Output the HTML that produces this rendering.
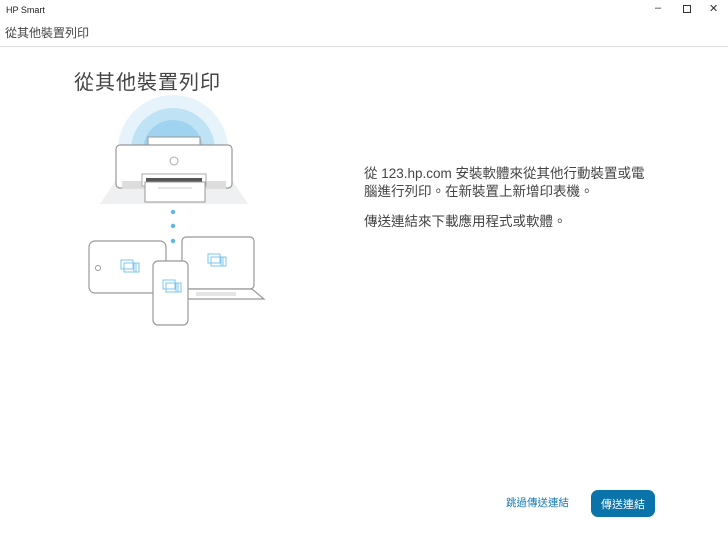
<!DOCTYPE html>
<html><head><meta charset="utf-8"><style>
body{margin:0;width:728px;height:538px;background:#fff;font-family:"Liberation Sans","Noto Sans CJK TC",sans-serif;position:relative;overflow:hidden}
.a{position:absolute;white-space:nowrap}
</style></head><body>
<div class="a" style="left:6px;top:5px;font-size:9px;color:#222">HP Smart</div>
<div class="a" style="left:655px;top:2px;font-size:11px;color:#333">–</div>
<div class="a" style="left:683px;top:5px;width:6px;height:6px;border:1px solid #333"></div>
<div class="a" style="left:709px;top:2px;font-size:11px;color:#333">✕</div>
<div class="a" style="left:5px;top:24px;font-size:12px;color:#444">從其他裝置列印</div>
<div class="a" style="left:0;top:46px;width:728px;height:1px;background:#e2e2e2"></div>
<div class="a" style="left:74px;top:66px;font-size:20px;color:#444;letter-spacing:1px">從其他裝置列印</div>
<svg class="a" style="left:0;top:0" width="728" height="538">
<polygon points="100,204 248,204 232,180 116,180" fill="#eef0f2"/>
<path d="M118,150 A55,55 0 0 1 228,150 Z" fill="#e6f3fb"/>
<path d="M131,150 A42,42 0 0 1 215,150 Z" fill="#bfe2f5"/>
<path d="M143,150 A30,30 0 0 1 203,150 Z" fill="#9fd3f0"/>
<rect x="148" y="137" width="52" height="12" fill="#fff" stroke="#999" stroke-width="1"/>
<rect x="116" y="145" width="116" height="43" rx="4" fill="#fff" stroke="#999" stroke-width="1.2"/>
<rect x="122" y="181" width="104" height="8" fill="#ddd"/>
<circle cx="174" cy="161" r="4" fill="none" stroke="#aaa"/>
<rect x="142" y="174" width="64" height="12" fill="#fff" stroke="#aaa"/>
<rect x="146" y="178" width="56" height="5" fill="#555"/>
<rect x="145" y="182" width="60" height="20" fill="#fff" stroke="#999"/>
<line x1="158" y1="188" x2="192" y2="188" stroke="#ccc"/>
<circle cx="173" cy="212" r="2.2" fill="#5bb7ea"/>
<circle cx="173" cy="226" r="2.2" fill="#5bb7ea"/>
<circle cx="173" cy="241" r="2.2" fill="#5bb7ea"/>
<rect x="89" y="241" width="77" height="52" rx="6" fill="#fff" stroke="#999" stroke-width="1.2"/>
<circle cx="98" cy="268" r="2.5" fill="none" stroke="#999"/>
<rect x="182" y="237" width="72" height="52" rx="4" fill="#fff" stroke="#999" stroke-width="1.2"/>
<polygon points="186,289 252,289 264,299 186,299" fill="#fff" stroke="#999" stroke-width="1.2"/>
<rect x="196" y="292" width="40" height="4" fill="#e5e5e5"/>
<rect x="153" y="261" width="35" height="64" rx="5" fill="#fff" stroke="#999" stroke-width="1.2"/>
<g fill="none" stroke="#7cc4ec" stroke-width="1">
<rect x="121" y="260" width="12" height="9"/><rect x="124" y="263" width="12" height="9"/><rect x="134" y="263" width="5" height="9"/>
<rect x="208" y="254" width="12" height="9"/><rect x="211" y="257" width="12" height="9"/><rect x="221" y="257" width="5" height="9"/>
<rect x="163" y="280" width="12" height="9"/><rect x="166" y="283" width="12" height="9"/><rect x="176" y="283" width="5" height="9"/>
</g>
</svg>
<div class="a" style="left:364px;top:165px;font-size:13.5px;color:#444;line-height:18px">從 123.hp.com 安裝軟體來從其他行動裝置或電<br>腦進行列印。在新裝置上新增印表機。</div>
<div class="a" style="left:364px;top:210px;font-size:13.5px;color:#444">傳送連結來下載應用程式或軟體。</div>
<div class="a" style="left:506px;top:495px;font-size:10.5px;color:#1479b4">跳過傳送連結</div>
<div class="a" style="left:591px;top:490px;width:64px;height:27px;border-radius:7px;background:#0a73a9;color:#fff;font-size:11px;display:flex;align-items:center;justify-content:center">傳送連結</div>
</body></html>
